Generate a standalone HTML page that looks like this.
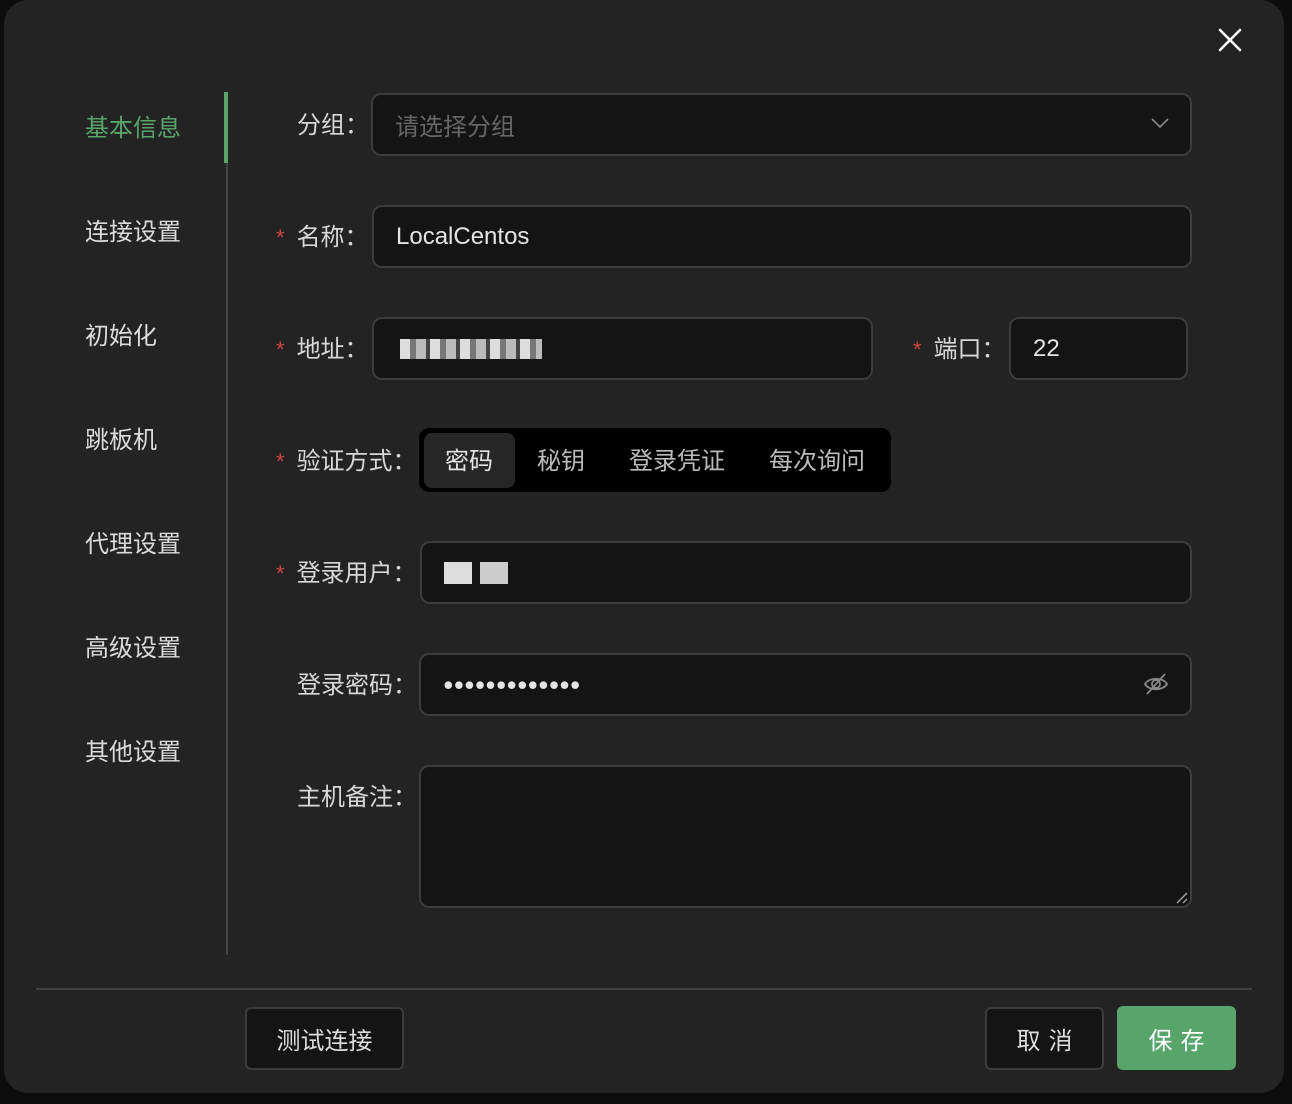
<!DOCTYPE html>
<html><head><meta charset="utf-8"><style>
body{margin:0;width:1292px;height:1104px;background:#0c0c0c;font-family:"Liberation Sans","Noto Sans CJK SC",sans-serif;position:relative;overflow:hidden}
.dlg{position:absolute;left:4px;top:0;width:1280px;height:1093px;background:#232323;border-radius:24px}
.a{position:absolute}
.nav{position:absolute;left:85px;font-size:24px;color:#dcdcdc;line-height:30px;transform:translateY(-13px)}
.lbl{position:absolute;font-size:24px;color:#d8d8d8;line-height:30px;transform:translateY(-13px);white-space:nowrap}
.st{color:#d0463f;margin-right:12px;font-size:22px}
.in{position:absolute;background:#141414;border:2px solid #3c3c3c;border-radius:10px;box-sizing:border-box;font-size:24px;color:#e4e4e4;display:flex;align-items:center;padding-left:22px}
.btn{position:absolute;box-sizing:border-box;border-radius:6px;font-size:24px;display:flex;align-items:center;justify-content:center}
</style></head><body>
<div class="dlg"></div>
<svg class="a" style="left:1218px;top:28px" width="24" height="24"><path d="M2 2L22 22M22 2L2 22" stroke="#fff" stroke-width="2.6" stroke-linecap="round"/></svg>
<div class="a" style="left:226px;top:92px;width:2px;height:863px;background:#444"></div>
<div class="a" style="left:224px;top:92px;width:4px;height:71px;background:#58a56c"></div>
<div class="nav" style="top:127px;color:#58a56c">基本信息</div>
<div class="nav" style="top:231px">连接设置</div>
<div class="nav" style="top:335px">初始化</div>
<div class="nav" style="top:439px">跳板机</div>
<div class="nav" style="top:543px">代理设置</div>
<div class="nav" style="top:647px">高级设置</div>
<div class="nav" style="top:751px">其他设置</div>

<div class="lbl" style="left:297px;top:124px">分组：</div>
<div class="in" style="left:371px;top:93px;width:821px;height:63px;color:#666">请选择分组</div>
<svg class="a" style="left:1151px;top:117px" width="18" height="12"><path d="M1 2L9 10L17 2" stroke="#888" stroke-width="1.6" fill="none"/></svg>

<div class="lbl" style="left:276px;top:236px"><span class="st">*</span>名称：</div>
<div class="in" style="left:372px;top:205px;width:820px;height:63px">LocalCentos</div>

<div class="lbl" style="left:276px;top:348px"><span class="st">*</span>地址：</div>
<div class="in" style="left:372px;top:317px;width:501px;height:63px;padding-left:26px"><span style="display:inline-block;width:142px;height:20px;background:repeating-linear-gradient(90deg,#ddd 0 10px,#777 10px 16px,#bbb 16px 26px,#444 26px 30px)"></span></div>
<div class="lbl" style="left:913px;top:348px"><span class="st">*</span>端口：</div>
<div class="in" style="left:1009px;top:317px;width:179px;height:63px">22</div>

<div class="lbl" style="left:276px;top:460px"><span class="st">*</span>验证方式：</div>
<div class="a" style="left:419px;top:428px;width:472px;height:64px;background:#000;border-radius:10px"></div>
<div class="a" style="left:424px;top:433px;width:91px;height:55px;background:#262626;border-radius:8px"></div>
<div class="lbl" style="left:445px;top:460px;color:#e4e4e4">密码</div>
<div class="lbl" style="left:537px;top:460px;color:#bbb">秘钥</div>
<div class="lbl" style="left:629px;top:460px;color:#bbb">登录凭证</div>
<div class="lbl" style="left:769px;top:460px;color:#bbb">每次询问</div>

<div class="lbl" style="left:276px;top:572px"><span class="st">*</span>登录用户：</div>
<div class="in" style="left:420px;top:541px;width:772px;height:63px"><span style="display:inline-block;width:64px;height:22px;background:linear-gradient(90deg,#ddd 0 28px,transparent 28px 36px,#ccc 36px)"></span></div>

<div class="lbl" style="left:297px;top:684px">登录密码：</div>
<div class="in" style="left:419px;top:653px;width:773px;height:63px;font-size:17.5px">●●●●●●●●●●●●●</div>
<svg class="a" style="left:1143px;top:672px" width="26" height="24"><path d="M2 12C6 5 20 5 24 12C20 19 6 19 2 12Z" stroke="#888" stroke-width="1.8" fill="none"/><circle cx="13" cy="12" r="4" stroke="#888" stroke-width="1.8" fill="none"/><path d="M4 22L22 2" stroke="#888" stroke-width="1.8"/></svg>

<div class="lbl" style="left:297px;top:796px">主机备注：</div>
<div class="in" style="left:419px;top:765px;width:773px;height:143px"></div>
<svg class="a" style="left:1175px;top:891px" width="14" height="14"><path d="M2 12L12 2M8 12L12 8" stroke="#aaa" stroke-width="1.3"/></svg>

<div class="a" style="left:36px;top:988px;width:1216px;height:2px;background:#3f3f3f"></div>
<div class="btn" style="left:245px;top:1007px;width:159px;height:63px;background:#141414;border:2px solid #3c3c3c;color:#ddd">测试连接</div>
<div class="btn" style="left:985px;top:1007px;width:119px;height:63px;background:#141414;border:2px solid #3c3c3c;color:#ddd;letter-spacing:8px;padding-left:8px">取消</div>
<div class="btn" style="left:1117px;top:1006px;width:119px;height:64px;background:#58a56c;color:#fff;letter-spacing:8px;padding-left:8px">保存</div>
</body></html>
